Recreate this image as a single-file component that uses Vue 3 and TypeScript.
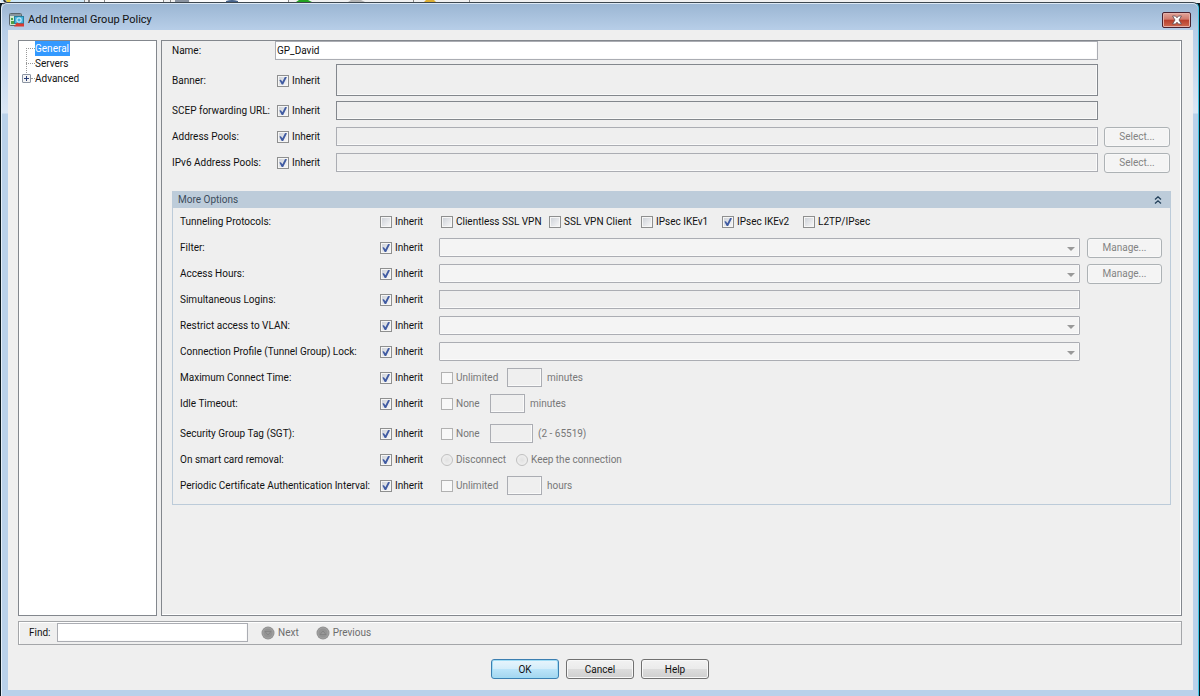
<script setup lang="ts">
import { ref } from 'vue'

interface PoolRow {
  id: string
  label: string
  kind: 'area' | 'text' | 'pool'
}

interface OptionRow {
  id: string
  label: string
  kind: 'protocols' | 'select' | 'text' | 'amount' | 'radios'
  manage?: boolean
  check?: string
  unit?: string
}

const name = ref('GP_David')
const find = ref('')

const poolRows: PoolRow[] = [
  { id: 'banner', label: 'Banner:', kind: 'area' },
  { id: 'scep', label: 'SCEP forwarding URL:', kind: 'text' },
  { id: 'pools', label: 'Address Pools:', kind: 'pool' },
  { id: 'pools6', label: 'IPv6 Address Pools:', kind: 'pool' },
]

const protocols = ref([
  { label: 'Clientless SSL VPN', on: false },
  { label: 'SSL VPN Client', on: false },
  { label: 'IPsec IKEv1', on: false },
  { label: 'IPsec IKEv2', on: true },
  { label: 'L2TP/IPsec', on: false },
])

const optionRows: OptionRow[] = [
  { id: 'tunneling', label: 'Tunneling Protocols:', kind: 'protocols' },
  { id: 'filter', label: 'Filter:', kind: 'select', manage: true },
  { id: 'hours', label: 'Access Hours:', kind: 'select', manage: true },
  { id: 'logins', label: 'Simultaneous Logins:', kind: 'text' },
  { id: 'vlan', label: 'Restrict access to VLAN:', kind: 'select' },
  { id: 'lock', label: 'Connection Profile (Tunnel Group) Lock:', kind: 'select' },
  { id: 'connect', label: 'Maximum Connect Time:', kind: 'amount', check: 'Unlimited', unit: 'minutes' },
  { id: 'idle', label: 'Idle Timeout:', kind: 'amount', check: 'None', unit: 'minutes' },
  { id: 'sgt', label: 'Security Group Tag (SGT):', kind: 'amount', check: 'None', unit: '(2 - 65519)' },
  { id: 'card', label: 'On smart card removal:', kind: 'radios' },
  { id: 'cert', label: 'Periodic Certificate Authentication Interval:', kind: 'amount', check: 'Unlimited', unit: 'hours' },
]
</script>

<template>
  <div class="desktop">
    <svg class="backdrop" width="600" height="2" viewBox="0 0 600 2" aria-hidden="true">
      <rect width="83" height="2" fill="#cfe8f8" />
      <path d="M2 0h2l2 2H3z" fill="#333" />
      <path d="M5 0h5l-1 2h-3z" fill="#e8cf3c" />
      <rect x="88" width="74" height="2" fill="#fbfbfb" />
      <rect x="189" width="98" height="2" fill="#fbfbfb" />
      <path d="M83 0h1v2h-1zM87 0h2v2h-2zM103 0h1v2h-1zM162 0h1v2h-1zM169 0h1v2h-1zM287 0h1v2h-1zM412 0h1v2h-1zM468 0h1v2h-1z" fill="#888" />
      <path d="M174 0h14v2h-14z" fill="#8a93a0" />
      <path d="M225 1q6-2 12 0v1h-12z" fill="#44618a" />
      <path d="M295 2l3-2h9l4 2z" fill="#22a322" />
      <path d="M347 2l3-2h10l4 2z" fill="#b5b5b5" />
      <path d="M423 2l2-2h8l2 2z" fill="#dcae32" />
    </svg>
    <main class="window">
      <header class="titlebar">
        <svg class="logo" width="16" height="14" viewBox="0 0 16 14" aria-hidden="true">
          <rect x=".5" y=".5" width="12" height="12" rx="1" fill="#d5ead0" stroke="#5a656c" />
          <path d="M1 1h11v2H1z" fill="#87959e" />
          <path d="M2 5h2v2H2zM2 8h3v3H2z" fill="#4aa04a" />
          <rect x="5.500" y="3.500" width="9" height="7" fill="#43b3de" stroke="#26809f" />
          <rect x="8" y="5" width="4" height="4" rx="1" fill="none" stroke="#e8f8ff" />
          <path d="M5 13.500l3-4 2 1h5v3z" fill="#d93a32" />
        </svg>
        <h1>Add Internal Group Policy</h1>
        <button class="close" type="button" aria-label="Close">
          <svg width="12" height="10" viewBox="0 0 12 10" aria-hidden="true">
            <path d="M1.500 1h3L6 2.800 7.500 1h3L8 5l2.500 4h-3L6 7.200 4.500 9h-3L4 5z" fill="#fff" stroke="#5c4a50" stroke-width=".8" />
          </svg>
        </button>
      </header>

      <div class="client">
        <div class="split">
          <nav class="tree" aria-label="Sections">
            <ul>
              <li><a href="#general" class="selected">General</a></li>
              <li><a href="#servers">Servers</a></li>
              <li class="branch">
                <button class="expander" type="button" aria-label="Expand Advanced"></button>
                <a href="#advanced">Advanced</a>
              </li>
            </ul>
          </nav>

          <section class="panel">
            <div class="row name-row">
              <label for="name">Name:</label>
              <input id="name" v-model="name" class="field editable" type="text">
            </div>
            <div v-for="row in poolRows" :key="row.id" class="row pool-row" :class="row.id">
              <label :for="row.id">{{ row.label }}</label>
              <label class="check"><input type="checkbox" checked>Inherit</label>
              <textarea v-if="row.kind === 'area'" :id="row.id" class="field strong area" disabled></textarea>
              <input v-else :id="row.id" class="field" :class="{ strong: row.kind === 'text' }" type="text" disabled>
              <button v-if="row.kind === 'pool'" class="btn" type="button" disabled>Select...</button>
            </div>

            <section class="more">
              <header class="more-head">
                <h2>More Options</h2>
                <button class="collapse" type="button" aria-label="Collapse">
                  <svg width="8" height="8" viewBox="0 0 8 8" aria-hidden="true">
                    <path d="M1 3.500L4 .8l3 2.700M1 7.500l3-2.700 3 2.700" fill="none" stroke="#23405a" stroke-width="1.300" />
                  </svg>
                </button>
              </header>
              <div class="options">
                <div v-for="row in optionRows" :key="row.id" class="row option-row" :class="row.id">
                  <label :for="row.id">{{ row.label }}</label>
                  <label class="check">
                    <input :id="row.kind === 'protocols' || row.kind === 'radios' ? row.id : undefined" type="checkbox" :checked="row.kind !== 'protocols'">Inherit
                  </label>

                  <div v-if="row.kind === 'protocols'" class="protocols">
                    <label v-for="p in protocols" :key="p.label" class="check">
                      <input v-model="p.on" type="checkbox">{{ p.label }}
                    </label>
                  </div>
                  <span v-else-if="row.kind === 'select'" class="combo">
                    <select :id="row.id" class="field" disabled></select>
                  </span>
                  <input v-else-if="row.kind === 'text'" :id="row.id" class="field" type="text" disabled>
                  <div v-else-if="row.kind === 'amount'" class="amount">
                    <label class="check off" :class="row.check === 'None' ? 'short' : 'long'">
                      <input type="checkbox" disabled>{{ row.check }}
                    </label>
                    <input :id="row.id" class="field" type="text" disabled>
                    <span class="unit">{{ row.unit }}</span>
                  </div>
                  <div v-else class="radios">
                    <label class="check off"><input type="radio" name="card-removal" disabled>Disconnect</label>
                    <label class="check off"><input type="radio" name="card-removal" disabled>Keep the connection</label>
                  </div>

                  <button v-if="row.manage" class="btn" type="button" disabled>Manage...</button>
                </div>
              </div>
            </section>
          </section>
        </div>

        <form class="findbar" @submit.prevent>
          <label for="find">Find:</label>
          <input id="find" v-model="find" class="field editable" type="text">
          <div class="steps">
            <button class="step" type="button" disabled>
              <svg width="14" height="14" viewBox="0 0 14 14" aria-hidden="true">
                <circle cx="7" cy="7" r="6.500" fill="#939393" />
                <circle cx="7" cy="7" r="5" fill="none" stroke="#a2a2a2" />
                <path d="M4 5.500h6L7 9z" fill="#999" stroke="#808080" stroke-width=".8" />
              </svg>
              Next
            </button>
            <button class="step" type="button" disabled>
              <svg width="14" height="14" viewBox="0 0 14 14" aria-hidden="true">
                <circle cx="7" cy="7" r="6.500" fill="#939393" />
                <circle cx="7" cy="7" r="5" fill="none" stroke="#a2a2a2" />
                <path d="M4 8.500h6L7 5z" fill="#999" stroke="#808080" stroke-width=".8" />
              </svg>
              Previous
            </button>
          </div>
        </form>

        <footer class="actions">
          <button class="btn primary" type="button">OK</button>
          <button class="btn" type="button">Cancel</button>
          <button class="btn" type="button">Help</button>
        </footer>
      </div>
    </main>
  </div>
</template>

<style>
body {
  margin: 0;
  background: #000;
}
</style>

<style scoped>
* {
  box-sizing: border-box;
}

.desktop {
  display: flex;
  flex-direction: column;
  min-height: 100vh;
  padding-left: 1px;
  background: linear-gradient(#f0f0f0 3px, #0b1a22 3px);
  font-family: Roboto, "Liberation Sans", sans-serif;
  font-size: 10px;
  line-height: 14px;
  color: #111;
}

button,
input,
select,
textarea {
  margin: 0;
  font: inherit;
  color: inherit;
}

h1,
h2,
ul {
  margin: 0;
  padding: 0;
  font-weight: normal;
}

.backdrop {
  display: block;
  flex: none;
}

.window {
  flex: 1;
  display: flex;
  flex-direction: column;
  margin-right: 1px;
  padding: 0 5px 6px 6px;
  border: 1px solid #3d474f;
  border-right-color: #3fc6e4;
  border-left-color: #e4eef8;
  border-bottom: 0;
  border-radius: 6px 6px 0 0;
  background: linear-gradient(#9ab5d2, #b6cde7 26px, #dbe7f5 110px, #b9d1ea 111px);
  box-shadow: inset 0 1px #dce8f4;
}

.titlebar {
  display: flex;
  align-items: center;
  gap: 3px;
  height: 27px;
  padding: 6px 2px 0 1px;
}

.titlebar h1 {
  flex: 1;
  font-size: 11px;
  line-height: 16px;
}

.close {
  display: flex;
  align-items: center;
  justify-content: center;
  width: 29px;
  height: 16px;
  padding: 0;
  border: 1px solid #4a2230;
  border-radius: 2px;
  background: linear-gradient(#e2a59b, #d07a6d 45%, #b83d2b 50%, #cf6a50);
  box-shadow: inset 0 0 0 1px #e5b0a8;
}

.client {
  flex: 1;
  display: flex;
  flex-direction: column;
  padding: 10px 11px 11px 10px;
  background: #efefef;
}

.split {
  flex: 1;
  display: flex;
  gap: 4px;
}

.tree {
  width: 139px;
  padding-left: 3px;
  border: 1px solid #83878d;
  background: #fff;
}

.tree ul {
  position: relative;
  list-style: none;
}

.tree ul::before {
  content: "";
  position: absolute;
  top: 7px;
  bottom: 7px;
  left: 4px;
  border-left: 1px dotted #999;
}

.tree li {
  display: flex;
  align-items: center;
  height: 15px;
  padding-left: 4px;
}

.tree li::before {
  content: "";
  width: 9px;
  border-top: 1px dotted #999;
}

.tree .branch {
  padding-left: 0;
}

.tree .branch::before {
  order: 1;
  width: 4px;
}

.tree a {
  order: 2;
  color: inherit;
  line-height: 15px;
  text-decoration: none;
}

.tree .selected {
  padding-right: 1px;
  background: #3399ff;
  color: #fff;
}

.expander {
  position: relative;
  width: 9px;
  height: 9px;
  padding: 0;
  border: 1px solid #8c95a3;
  border-radius: 1px;
  background:
    linear-gradient(#2b3f78, #2b3f78) center / 5px 1px no-repeat,
    linear-gradient(#2b3f78, #2b3f78) center / 1px 5px no-repeat,
    #f4f4f4;
}

.panel {
  flex: 1;
  min-width: 0;
  padding: 0 10px;
  border: 1px solid #83878d;
  box-shadow: inset -1px -1px #fff;
}

.row {
  display: grid;
  align-items: center;
}

.name-row {
  grid-template-columns: 103px 1fr;
  padding-right: 73px;
}

.pool-row {
  grid-template-columns: 105px 59px 1fr 66px;
  padding-right: 1px;
}

.pool-row .field {
  width: auto;
  margin-right: 6px;
}

.banner {
  margin-top: 3px;
}

.scep {
  margin-top: 4px;
}

.pools,
.pools6 {
  margin-top: 6px;
}

.field {
  display: block;
  width: 100%;
  height: 19px;
  margin-bottom: 1px;
  padding: 0 1px;
  border: 1px solid #abadb3;
  border-radius: 0;
  background: #efefef;
  box-shadow: inset -1px -1px #fafafa;
  outline: 0;
  resize: none;
}

.field.strong {
  border-color: #83878d;
}

.field.editable {
  background: #fff;
}

.field.area {
  height: 32px;
}

.check {
  display: flex;
  align-items: center;
  gap: 3px;
  white-space: nowrap;
}

.check input {
  appearance: none;
  flex: none;
  display: grid;
  place-items: center;
  width: 12px;
  height: 12px;
  border: 1px solid #8e8f8f;
  background: linear-gradient(135deg, #cfd3d9, #f5f5f6) center / 8px 8px no-repeat #f6f6f6;
}

.check input:checked::before {
  content: "";
  width: 8px;
  height: 8px;
  background: #405ba2;
  clip-path: polygon(4% 44%, 24% 40%, 42% 66%, 76% 0, 100% 4%, 52% 100%, 34% 100%);
}

.check input:disabled {
  border-color: #b1b1b1;
  background: #f8f8f8;
}

.check input[type="radio"] {
  border-color: #c0c0c0;
  border-radius: 50%;
  background: radial-gradient(#e2e2e2, #f4f4f4);
}

.off,
.unit {
  color: #777;
}

.btn {
  height: 20px;
  padding: 0;
  border: 1px solid #707070;
  border-radius: 3px;
  background: linear-gradient(#f2f2f2, #ebebeb 49%, #dddddd 50%, #cfcfcf);
  box-shadow: inset 0 0 0 1px #f8f8f8;
}

.btn:disabled {
  border-color: #adb2b5;
  background: #f4f4f4;
  color: #838383;
}

.btn.primary {
  border-color: #3c7fb1;
  background: linear-gradient(#e8f5fc, #d4edfa 49%, #bce5fa 50%, #a4d6ef);
  box-shadow: inset 0 0 0 1px #9fdcf5;
}

.more {
  margin-top: 18px;
  border: 1px solid #bccbd9;
  border-top: 0;
}

.more-head {
  display: flex;
  align-items: center;
  justify-content: space-between;
  height: 17px;
  padding: 0 8px 0 5px;
  background: #bdccda;
}

.more-head h2 {
  font-size: 10px;
  color: #3c4c5c;
}

.collapse {
  display: flex;
  padding: 0;
  border: 0;
  background: none;
}

.options {
  padding: 1px 8px 5px 7px;
}

.option-row {
  grid-template-columns: 200px 59px 1fr 75px;
  height: 26px;
}

.option-row .combo,
.option-row > .field {
  margin-right: 7px;
  width: auto;
}

.sgt {
  margin-top: 4px;
}

.combo {
  position: relative;
}

.combo .field {
  appearance: none;
  background: #f4f4f4;
  border-radius: 1px;
  opacity: 1;
}

.combo::after {
  content: "";
  position: absolute;
  top: 9px;
  right: 5px;
  border: 4px solid transparent;
  border-top-color: #999;
  border-bottom: 0;
}

.protocols {
  display: grid;
  grid-template-columns: 108px 92px 81px 81px auto;
  grid-column: 3 / -1;
  padding-left: 2px;
}

.amount {
  display: flex;
  align-items: center;
  padding-left: 2px;
}

.amount .long {
  width: 66px;
}

.amount .short {
  width: 49px;
}

.amount .field {
  width: 35px;
  margin-right: 5px;
}

.sgt .amount .field {
  width: 43px;
}

.radios {
  display: grid;
  grid-template-columns: 75px auto;
  justify-content: start;
  padding-left: 2px;
}

.findbar {
  display: flex;
  align-items: center;
  height: 24px;
  margin-top: 5px;
  padding-left: 10px;
  border: 1px solid #a4a6a9;
  box-shadow: inset 1px 1px #fff;
}

.findbar label {
  width: 28px;
}

.findbar .field {
  width: 191px;
}

.steps {
  display: flex;
  gap: 17px;
  margin-left: 13px;
}

.step {
  display: flex;
  align-items: center;
  gap: 3px;
  padding: 0;
  border: 0;
  background: none;
  color: #6d6d6d;
}

.actions {
  display: flex;
  justify-content: center;
  gap: 7px;
  margin-top: 14px;
}

.actions .btn {
  width: 68px;
  padding-top: 1px;
}
</style>
